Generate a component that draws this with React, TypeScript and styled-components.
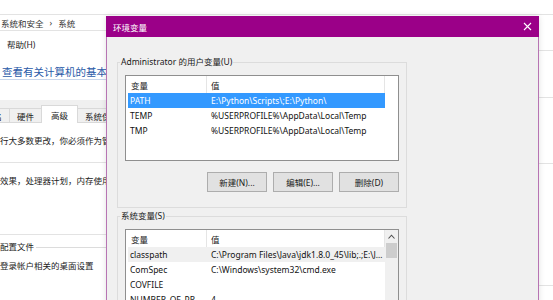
import styled, { createGlobalStyle } from "styled-components";

const GlobalStyle = createGlobalStyle`
  * { box-sizing: border-box; }
  html, body { margin: 0; padding: 0; background: #fff; }
  body {
    width: 553px;
    height: 300px;
    overflow: hidden;
    font-family: "Noto Sans", "Noto Sans CJK SC", sans-serif;
    font-size: 8.5px;
    color: #1a1a1a;
  }
`;

const Desktop = styled.div`
  position: relative;
  width: 553px;
  height: 300px;
  display: flex;
  overflow: hidden;
  background: #fff;
`;

/* ---------- window behind the dialog ---------- */

const SystemPane = styled.div`
  width: 539px;
  height: 300px;
  flex: none;
  display: flex;
  flex-direction: column;
  overflow: hidden;
  white-space: nowrap;
`;

const EdgeStrip = styled.div`
  flex: 1;
  display: flex;
  flex-direction: column;
`;

const HRule = styled.div<{ $gap: number }>`
  flex: none;
  height: 1px;
  margin-top: ${p => p.$gap}px;
  background: #e3e3e3;
`;

const TopGap = styled.div`
  flex: none;
  height: 15px;
  border-bottom: 1px solid #e3e3e3;
`;

const Breadcrumb = styled.div`
  flex: none;
  height: 16px;
  display: flex;
  align-items: center;
  gap: 6px;
  padding-left: 1px;
  border-bottom: 1px solid #e3e3e3;
  color: #333;
`;

const MenuBar = styled.div`
  flex: none;
  height: 25px;
  display: flex;
  align-items: center;
  padding-left: 7px;
  color: #222;
`;

const PageTitle = styled.div`
  flex: none;
  padding: 9px 0 0 2px;
  font-size: 10.5px;
  line-height: 14px;
  color: #2a5aa8;
  border-bottom: 1px solid #c9d7ec;
`;

const TabStrip = styled.div`
  flex: none;
  margin-top: 20px;
  height: 23px;
  display: flex;
  align-items: flex-end;
  background: #f0f0f0;
  border-bottom: 1px solid #d9d9d9;
`;

const Tab = styled.div<{ $active?: boolean; $first?: boolean }>`
  position: relative;
  height: ${p => (p.$active ? 18 : 14)}px;
  margin-left: ${p => (p.$first ? -40 : -1)}px;
  margin-bottom: ${p => (p.$active ? -1 : 0)}px;
  padding: 0 ${p => (p.$active ? 9 : 7)}px;
  display: flex;
  align-items: center;
  background: ${p => (p.$active ? "#fff" : "#f0f0f0")};
  border: 1px solid #d9d9d9;
  border-bottom: none;
  z-index: ${p => (p.$active ? 1 : 0)};
  color: #222;
`;

const PanelText = styled.div<{ $gap: number }>`
  flex: none;
  margin-top: ${p => p.$gap}px;
  line-height: 12px;
  color: #222;
`;

const GroupHeading = styled.div`
  flex: none;
  margin-top: 6px;
  display: flex;
  align-items: center;
  gap: 2px;
  line-height: 12px;
  color: #222;

  &::after {
    content: "";
    flex: 1;
    height: 1px;
    background: #dcdcdc;
  }
`;

/* ---------- environment variables dialog ---------- */

const Dialog = styled.div`
  position: absolute;
  left: 106px;
  top: 16px;
  width: 433px;
  height: 290px;
  display: flex;
  flex-direction: column;
  background: #f0f0f0;
  border: 1px solid #b774b3;
  border-top: none;
  box-shadow: 0 0 6px rgba(0, 0, 0, 0.12);
`;

const TitleBar = styled.div`
  flex: none;
  height: 21px;
  margin: 0 -1px;
  padding: 0 7px;
  display: flex;
  align-items: center;
  justify-content: space-between;
  background: #9b0088;
  color: #fff;
`;

const DialogBody = styled.div`
  flex: 1;
  min-height: 0;
  overflow: hidden;
  padding: 0 10px;
  display: flex;
  flex-direction: column;
`;

const Group = styled.fieldset<{ $gap: number }>`
  flex: none;
  width: 290px;
  margin: ${p => p.$gap}px 0 0 0;
  padding: 0 7px 15px 7px;
  border: 1px solid #dcdcdc;
`;

const GroupLabel = styled.legend`
  margin-left: -5px;
  padding: 0 1px;
  line-height: 12px;
  color: #1a1a1a;
`;

const ListBox = styled.div<{ $height: number }>`
  margin-top: 7px;
  width: 274px;
  height: ${p => p.$height}px;
  display: flex;
  background: #fff;
  border: 1px solid #8f8f8f;
  overflow: hidden;
`;

const ListBody = styled.div`
  width: 259px;
  padding-left: 2px;
  display: flex;
  flex-direction: column;
`;

const HeaderRow = styled.div`
  flex: none;
  height: 17px;
  display: grid;
  grid-template-columns: 79px 1fr;
`;

const HeaderCell = styled.div<{ $pad: number }>`
  display: flex;
  align-items: center;
  padding-left: ${p => p.$pad}px;
  border-right: 1px solid #e5e5e5;
  color: #222;
`;

const Row = styled.div<{ $state?: "active" | "inactive" }>`
  flex: none;
  height: 15px;
  display: grid;
  grid-template-columns: 79px 178px;
  align-items: center;
  background: ${p =>
    p.$state === "active" ? "#3399ff" : p.$state === "inactive" ? "#f0f0f0" : "transparent"};
  color: ${p => (p.$state === "active" ? "#fff" : "#111")};
`;

const Cell = styled.div<{ $pad: number }>`
  padding-left: ${p => p.$pad}px;
  overflow: hidden;
  text-overflow: ellipsis;
  white-space: nowrap;
`;

const ScrollTrack = styled.div<{ $visible?: boolean }>`
  width: 13px;
  margin-left: auto;
  display: flex;
  flex-direction: column;
  background: ${p => (p.$visible ? "#f0f0f0" : "transparent")};
`;

const ScrollArrow = styled.div`
  height: 13px;
  display: flex;
  align-items: center;
  justify-content: center;
`;

const ScrollThumb = styled.div`
  height: 15px;
  margin: 0 1px;
  background: #cdcdcd;
`;

const ButtonRow = styled.div`
  margin-top: 11px;
  display: flex;
  justify-content: flex-end;
  gap: 6px;
`;

const Button = styled.button`
  width: 60px;
  height: 20px;
  padding: 0;
  font: inherit;
  color: #1a1a1a;
  background: #e1e1e1;
  border: 1px solid #adadad;
`;

interface EnvVar {
  name: string;
  value: string;
}

const userVars: EnvVar[] = [
  { name: "PATH", value: "E:\\Python\\Scripts\\;E:\\Python\\" },
  { name: "TEMP", value: "%USERPROFILE%\\AppData\\Local\\Temp" },
  { name: "TMP", value: "%USERPROFILE%\\AppData\\Local\\Temp" },
];

const systemVars: EnvVar[] = [
  { name: "classpath", value: "C:\\Program Files\\Java\\jdk1.8.0_45\\lib;.;E:\\Java\\lib\\tools.jar" },
  { name: "ComSpec", value: "C:\\Windows\\system32\\cmd.exe" },
  { name: "COVFILE", value: "" },
  { name: "NUMBER_OF_PROCESSORS", value: "4" },
];

function VarList({ vars, height, selected, scroll }: {
  vars: EnvVar[];
  height: number;
  selected: "active" | "inactive";
  scroll?: boolean;
}) {
  return (
    <ListBox $height={height}>
      <ListBody>
        <HeaderRow>
          <HeaderCell $pad={3}>变量</HeaderCell>
          <HeaderCell $pad={4}>值</HeaderCell>
        </HeaderRow>
        {vars.map((v, i) => (
          <Row key={v.name} $state={i === 0 ? selected : undefined}>
            <Cell $pad={2}>{v.name}</Cell>
            <Cell $pad={4}>{v.value}</Cell>
          </Row>
        ))}
      </ListBody>
      <ScrollTrack $visible={scroll}>
        {scroll && (
          <>
            <ScrollArrow>
              <svg width="7" height="5" viewBox="0 0 7 5">
                <polyline points="0.5,4.5 3.5,1.2 6.5,4.5" fill="none" stroke="#505050" strokeWidth="1.1" />
              </svg>
            </ScrollArrow>
            <ScrollThumb />
          </>
        )}
      </ScrollTrack>
    </ListBox>
  );
}

export default function App() {
  return (
    <>
      <GlobalStyle />
      <Desktop>
        <SystemPane>
          <TopGap />
          <Breadcrumb>
            <span>系统和安全</span>
            <span>›</span>
            <span>系统</span>
          </Breadcrumb>
          <MenuBar>帮助(H)</MenuBar>
          <PageTitle>查看有关计算机的基本信息</PageTitle>
          <TabStrip>
            <Tab $first>计算机名</Tab>
            <Tab>硬件</Tab>
            <Tab $active>高级</Tab>
            <Tab>系统保护</Tab>
          </TabStrip>
          <PanelText $gap={12}>行大多数更改，你必须作为管理</PanelText>
          <HRule $gap={15} />
          <PanelText $gap={12}>效果，处理器计划，内存使用</PanelText>
          <HRule $gap={47} />
          <GroupHeading>配置文件</GroupHeading>
          <PanelText $gap={7}>登录帐户相关的桌面设置</PanelText>
        </SystemPane>
        <EdgeStrip>
          <HRule $gap={14} />
          <HRule $gap={35} />
          <HRule $gap={46} />
          <HRule $gap={65} />
          <HRule $gap={121} />
        </EdgeStrip>

        <Dialog>
          <TitleBar>
            <span>环境变量</span>
            <svg width="9" height="9" viewBox="0 0 9 9">
              <path d="M1 1 L8 8 M8 1 L1 8" stroke="#fff" strokeWidth="1.1" />
            </svg>
          </TitleBar>
          <DialogBody>
            <Group $gap={19}>
              <GroupLabel>Administrator 的用户变量(U)</GroupLabel>
              <VarList vars={userVars} height={86} selected="active" />
              <ButtonRow>
                <Button>新建(N)...</Button>
                <Button>编辑(E)...</Button>
                <Button>删除(D)</Button>
              </ButtonRow>
            </Group>
            <Group $gap={2}>
              <GroupLabel>系统变量(S)</GroupLabel>
              <VarList vars={systemVars} height={100} selected="inactive" scroll />
            </Group>
          </DialogBody>
        </Dialog>
      </Desktop>
    </>
  );
}
